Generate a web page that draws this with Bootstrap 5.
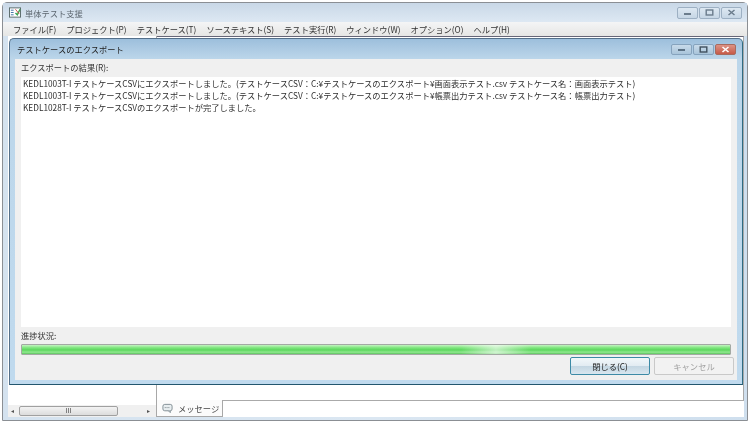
<!DOCTYPE html>
<html lang="ja"><head><meta charset="utf-8"><title>単体テスト支援</title>
<link href="https://cdn.jsdelivr.net/npm/bootstrap@5.3.0/dist/css/bootstrap.min.css" rel="stylesheet">
<style>
html,body{margin:0;background:#fff;height:425px;overflow:hidden}
body{font-family:"Noto Sans CJK JP","Liberation Sans",sans-serif;font-size:8.27px;line-height:12px;color:#333}
.stage{position:relative;width:751px;height:425px;padding:2px 3px 4px 2px;filter:blur(.3px)}
.mainwin{height:100%;border:1px solid #8b8f94;border-radius:5px 5px 0 0;background:linear-gradient(90deg,#d4e2ef,#dbe7f2 50%,#cfdfee);padding:0 3px 3px 5px}
.maintitle{height:19px;flex:none;margin:0 -3px 0 -5px;padding:0 5px 0 6px;background:linear-gradient(180deg,#c9d8e7,#dde8f3)}
.appname{color:#5d6770}
.capbtn{width:21px;height:12px;border:1px solid #9db0c3;border-radius:2px;background:linear-gradient(180deg,#dde8f2,#c6d6e5);display:flex;align-items:center;justify-content:center}
.capbtns{gap:1px}
.menubar{height:14px;margin:0 -3px 0 -5px;padding:0 0 0 10px;background:linear-gradient(180deg,#f4f5f6,#e6e6e4);gap:10px;white-space:nowrap;flex:none}
.bottomarea{flex:1;min-height:0;background:#fff}
.leftpane{width:149px;flex:none;border-right:1px solid #a8a8a8;display:flex;flex-direction:column;justify-content:flex-end}
.hscroll{height:12px;background:#f0f0f0;padding:0 3px;gap:2px}
.arrow{font-size:6px;color:#555;width:6px;line-height:12px}
.thumb{flex:none;width:99px;height:10px;border:1px solid #a0a0a0;border-radius:2px;background:linear-gradient(180deg,#f3f3f3,#dcdcdc);font-size:6px;line-height:7px;text-align:center}
.rightpane{flex:1;display:flex;flex-direction:column;justify-content:flex-end;border-top:1px solid #667;border-right:1px solid #a8a8a8}
.tabrow{height:17px;flex:none;margin-right:-1px}
.msgtab{width:66px;flex:none;background:#fbfbfb;border-right:1px solid #a8a8a8;border-bottom:1px solid #a8a8a8;gap:5px;padding-left:5px;color:#444;white-space:nowrap}
.msgfill{flex:1;border-top:1px solid #aaa;background:#fff}
.dialog{position:absolute;left:9px;top:38px;width:734px;height:347px;border:1px solid #54708a;border-bottom-color:#23566e;border-right-color:#2e6c84;border-radius:5px 5px 0 0;background:linear-gradient(180deg,#9dbfdc,#bcd6ea 20px,#c0daee);padding:0 5px 4px 5px;display:flex;flex-direction:column}
.dlgtitle{height:20px;flex:none;padding:0 1px 0 2px;color:#222}
.capbtnd{width:21px;height:11px;border:1px solid #86a3bd;border-radius:2px;background:linear-gradient(180deg,#c8dbea,#a9c4da);display:flex;align-items:center;justify-content:center}
.capclose{background:linear-gradient(180deg,#dd9385,#c65a48);border-color:#a86a5e}
.dlgbody{flex:1;background:#f0f0f0;padding:2px 6px 5px 6px;display:flex;flex-direction:column;min-height:0}
.resultbox{height:250px;flex:none;background:#fff;margin-top:4px;padding:0 2px;color:#2e2e2e;white-space:nowrap}
.resultbox div{height:12px}
.proglabel{margin-top:2px;height:16px;line-height:12px}
.progbar{height:11px;flex:none;border:1px solid #a3a9a3;border-radius:1px;background:linear-gradient(180deg,#c5f3c3 0,#7fe67e 30%,#5cd65d 55%,#90e98f 80%,#5cc45e 100%);position:relative;overflow:hidden}
.progshine{position:absolute;left:62%;top:0;bottom:0;width:70px;background:linear-gradient(90deg,transparent,rgba(255,255,255,.6),transparent)}
.winbtn{height:18px;font-size:8.27px;line-height:15px;padding:0;border-radius:2px;width:80px}
.btnprimaryish{border:1px solid #3d8aa6;background:linear-gradient(180deg,#f2f7fa 0,#e2ebf2 50%,#c4d6e2 52%,#d8e6ef);color:#222}
.btndisabled,.btndisabled:disabled{border:1px solid #c9c9c9;background:#f2f2f2;color:#a0a0a0;opacity:1}
.btnrow{margin-top:2px;gap:4px;margin-right:-3px}
</style></head><body>
<div class="stage">
 <div class="mainwin d-flex flex-column">
  <div class="maintitle d-flex align-items-center justify-content-between">
   <div class="d-flex align-items-center gap-1">
    <svg width="12" height="11" viewBox="0 0 13 11"><rect x=".5" y=".5" width="12" height="10" fill="#fff" stroke="#566"/><path d="M2 3h3M2 5.500h3M2 8h3" stroke="#3a6ea5"/><path d="M7 6l2 2 3-6" stroke="#3aa655" stroke-width="1.600" fill="none"/><path d="M7 2l4 5" stroke="#c44"/></svg>
    <span class="appname">単体テスト支援</span>
   </div>
   <div class="d-flex capbtns">
    <span class="capbtn"><svg width="9" height="6"><rect x="1" y="3" width="7" height="2" fill="#6b7c8c"/></svg></span>
    <span class="capbtn"><svg width="9" height="7"><rect x="1.200" y="1" width="6.600" height="5" fill="none" stroke="#6b7c8c" stroke-width="1.400"/></svg></span>
    <span class="capbtn"><svg width="9" height="7"><path d="M1.500 1l6 5M7.500 1l-6 5" stroke="#6b7c8c" stroke-width="1.500"/></svg></span>
   </div>
  </div>
  <div class="menubar d-flex align-items-center">
   <span>ファイル(F)</span><span>プロジェクト(P)</span><span>テストケース(T)</span><span>ソーステキスト(S)</span><span>テスト実行(R)</span><span>ウィンドウ(W)</span><span>オプション(O)</span><span>ヘルプ(H)</span>
  </div>
  <div class="bottomarea d-flex">
   <div class="leftpane">
    <div class="hscroll d-flex align-items-center"><span class="arrow">◂</span><div class="thumb">III</div><span class="arrow ms-auto">▸</span></div>
   </div>
   <div class="rightpane">
    <div class="tabrow d-flex">
     <div class="msgtab d-flex align-items-center">
      <svg width="11" height="11" viewBox="0 0 12 11"><rect x="1" y="1" width="10" height="7" rx="2" fill="#e8eef0" stroke="#7d8a90"/><path d="M3 4.500h6" stroke="#6d7a80" stroke-dasharray="1 1"/><path d="M7 8l2 2v-2" fill="#e8eef0" stroke="#7d8a90"/></svg>
      <span>メッセージ</span>
     </div>
     <div class="msgfill"></div>
    </div>
   </div>
  </div>
 </div>
 <div class="dialog">
  <div class="dlgtitle d-flex align-items-center justify-content-between">
   <span>テストケースのエクスポート</span>
   <div class="d-flex capbtns">
    <span class="capbtnd"><svg width="9" height="6"><rect x="1" y="3" width="7" height="2" fill="#5b7184"/></svg></span>
    <span class="capbtnd"><svg width="9" height="7"><rect x="1.200" y="1" width="6.600" height="5" fill="none" stroke="#40505e" stroke-width="1.400"/></svg></span>
    <span class="capbtnd capclose"><svg width="9" height="7"><path d="M1.500 1l6 5M7.500 1l-6 5" stroke="#fff" stroke-width="1.600"/></svg></span>
   </div>
  </div>
  <div class="dlgbody">
   <div>エクスポートの結果(R):</div>
   <div class="resultbox">
    <div>KEDL1003T-I テストケースCSVにエクスポートしました。(テストケースCSV：C:¥テストケースのエクスポート¥画面表示テスト.csv テストケース名：画面表示テスト)</div>
    <div>KEDL1003T-I テストケースCSVにエクスポートしました。(テストケースCSV：C:¥テストケースのエクスポート¥帳票出力テスト.csv テストケース名：帳票出力テスト)</div>
    <div>KEDL1028T-I テストケースCSVのエクスポートが完了しました。</div>
   </div>
   <div class="proglabel">進捗状況:</div>
   <div class="progbar"><div class="progshine"></div></div>
   <div class="d-flex justify-content-end btnrow">
    <button class="btn winbtn btnprimaryish">閉じる(C)</button>
    <button class="btn winbtn btndisabled" disabled>キャンセル</button>
   </div>
  </div>
 </div>
</div>
</body></html>
